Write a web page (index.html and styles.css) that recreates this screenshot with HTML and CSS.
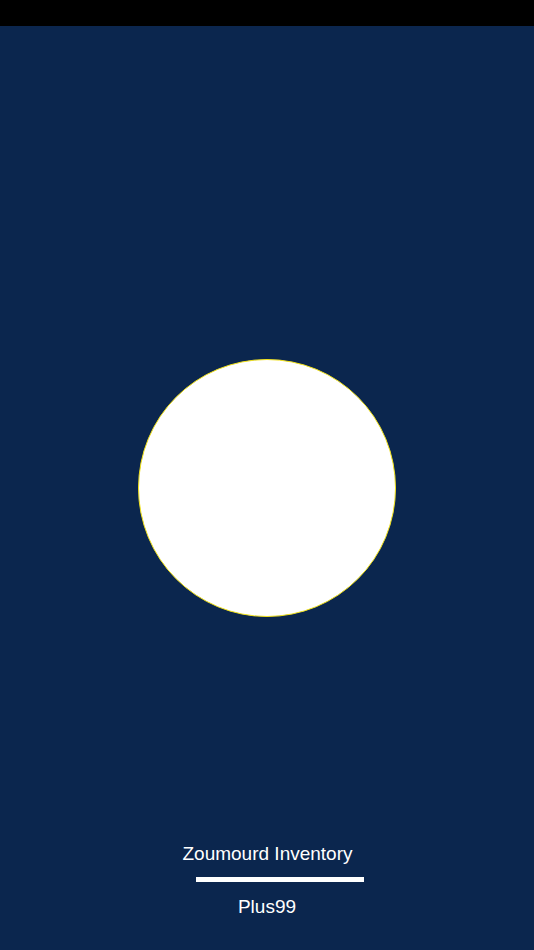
FILE: index.html
```html
<!DOCTYPE html>
<html lang="en">
<head>
<meta charset="utf-8">
<title>Zoumourd Inventory</title>
<link rel="stylesheet" href="styles.css">
</head>
<body>
<div class="status-bar"></div>
<main class="splash">
  <div class="logo-circle"></div>
  <footer class="brand">
    <div class="brand-title">Zoumourd Inventory</div>
    <div class="brand-rule"></div>
    <div class="brand-sub">Plus99</div>
  </footer>
</main>
</body>
</html>
```

FILE: styles.css
```css
html, body {
  margin: 0;
  padding: 0;
}
body {
  width: 534px;
  height: 950px;
  overflow: hidden;
  background: #0b264e;
  font-family: "Liberation Sans", Arial, sans-serif;
}
.status-bar {
  height: 26px;
  background: #000;
}
.splash {
  height: 924px;
  display: flex;
  flex-direction: column;
  align-items: center;
}
.logo-circle {
  box-sizing: border-box;
  width: 258px;
  height: 258px;
  margin-top: 333px;
  border-radius: 50%;
  background: #fff;
  border: 1px solid #f2e21a;
}
.brand {
  margin-top: 226px;
  display: flex;
  flex-direction: column;
  align-items: center;
  color: #fff;
  font-size: 19px;
  line-height: 22px;
}
.brand-title {
  margin-left: 1px;
}
.brand-rule {
  width: 168px;
  height: 5px;
  background: #fff;
  margin-top: 12px;
  margin-left: 25px;
}
.brand-sub {
  margin-top: 14px;
}
```
